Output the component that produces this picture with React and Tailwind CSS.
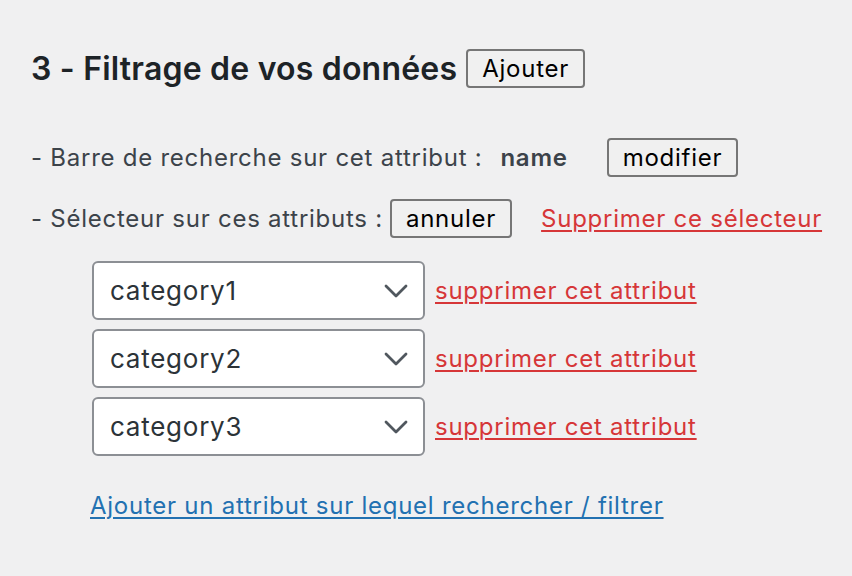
const Btn = ({ children }) => (
  <button className="h-[39px] px-[14px] rounded-[4px] border-2 border-[#767676] bg-[#f0f0f0] text-black text-[24px] tracking-[0.75px] leading-none">
    {children}
  </button>
);

const Chevron = () => (
  <svg width="24" height="14" viewBox="0 0 24 14" fill="none" className="shrink-0">
    <path d="M2 2l10 10L22 2" stroke="#50575e" strokeWidth="2.8" strokeLinecap="round" strokeLinejoin="round" />
  </svg>
);

const AttrRow = ({ value }) => (
  <div className="flex items-center gap-[10px]">
    <div className="w-[333px] h-[59px] rounded-[6px] border-2 border-[#8c8f94] bg-white flex items-center justify-between pl-[16px] pr-[15px]">
      <span className="text-[26px] tracking-[0.75px] text-[#2c3338]">{value}</span>
      <Chevron />
    </div>
    <a href="#" className="text-[24px] tracking-[0.75px] text-[#d63638] underline underline-offset-[3px] decoration-2">
      supprimer cet attribut
    </a>
  </div>
);

export default function App() {
  return (
    <div
      className="min-h-screen bg-[#f0f0f1] pl-[31px] pt-[49px] text-[#3c434a]"
      style={{ fontFamily: "Inter, 'Noto Sans', sans-serif" }}
    >
      <div className="flex items-center gap-[9px]">
        <h2 className="text-[32px] tracking-[0.2px] font-semibold text-[#1d2327] leading-none">3 - Filtrage de vos données</h2>
        <Btn>Ajouter</Btn>
      </div>

      <div className="mt-[50px] flex items-center text-[24px] tracking-[0.75px]">
        <span>- Barre de recherche sur cet attribut :</span>
        <span className="ml-[18px] font-semibold">name</span>
        <span className="ml-[39px]">
          <Btn>modifier</Btn>
        </span>
      </div>

      <div className="mt-[22px] flex items-center text-[24px] tracking-[0.75px]">
        <span>- Sélecteur sur ces attributs :</span>
        <span className="ml-[7px]">
          <Btn>annuler</Btn>
        </span>
        <a href="#" className="ml-[29px] text-[#d63638] underline underline-offset-[3px] decoration-2">
          Supprimer ce sélecteur
        </a>
      </div>

      <div className="mt-[23px] ml-[61px] flex flex-col gap-[9px]">
        <AttrRow value="category1" />
        <AttrRow value="category2" />
        <AttrRow value="category3" />
      </div>

      <a href="#" className="block mt-[32px] ml-[59px] w-fit text-[24px] tracking-[0.75px] text-[#2271b1] underline underline-offset-[3px] decoration-2">
        Ajouter un attribut sur lequel rechercher / filtrer
      </a>
    </div>
  );
}
